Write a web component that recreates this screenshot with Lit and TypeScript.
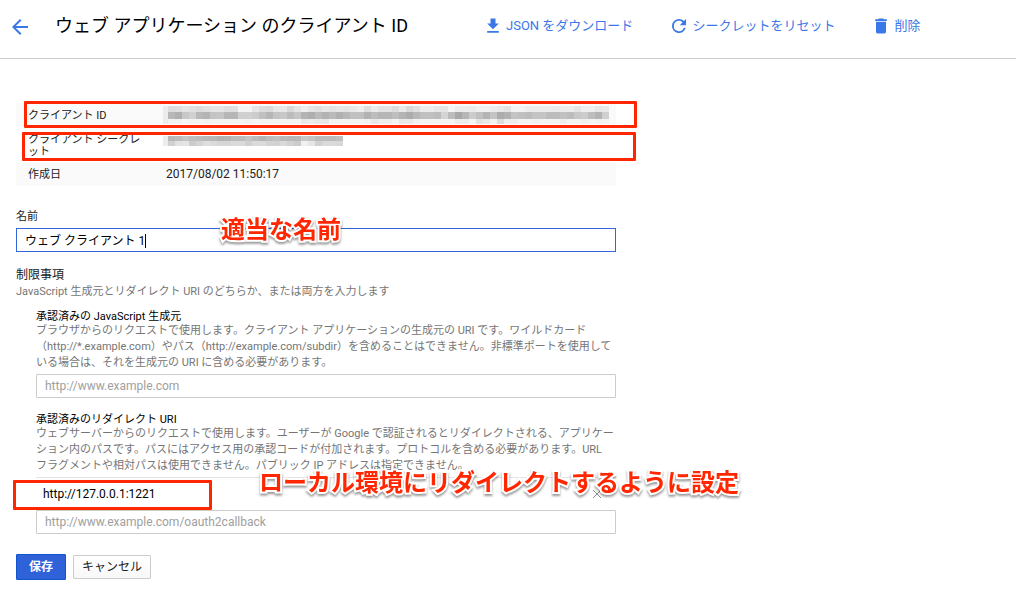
import { LitElement, html, css, svg } from "lit";
import { customElement, property, state } from "lit/decorators.js";

/* Masked values: one string per band, one hex byte per 7px cell. */
interface Band {
  y: number;
  height: number;
  shades: string;
}

const ID_BANDS: Band[] = [
  {
    y: 0,
    height: 6,
    shades:
      "dcdee4e0dce0e4e4dee0f4f4e6dcdae6e8d8e4eee4e0e6e2e6e4e8eedeeae2e4dce8d8e0ecece6e4f4ececeaf0f0ece8e2f2f2ececececeaecece4eeeee6e8",
  },
  {
    y: 6,
    height: 7,
    shades:
      "b8b0c8d0b8b4c4c6b6b6d0d0ccc0b6c4c8bcc6b4aebab2bab0b8c0c0b2bcb6b6beb4acb8c0c0bcd4bca8b6ccc0b4c4acb2c4c0bcc4c4bcbcc2bcc8ccbeb4d0",
  },
  {
    y: 13,
    height: 5,
    shades:
      "f2f2f6f4f4f2f4f4f4f4f4f2f6f4f4f4f4f4f4e8ece8e6f4f4f4f4f4f2e8eeeef4e8eaf2f4f4f4f4f4ececf4e2e8f2dceeeef4f4f2f4f4f4eef4f4f0f4f2f4",
  },
];

const SECRET_BANDS: Band[] = [
  { y: 0, height: 5, shades: "b8bcc4bebcb8b8b2b4bcbcc4bcb4bcc0bab8b8c8c4bcbcbcc0" },
  { y: 5, height: 5, shades: "d0e2e4ccd4dedad6d6dadad0dadad4d2dad2ccf0e6d0dadad8" },
];

const CELL = 7;

@customElement("masked-value")
class MaskedValue extends LitElement {
  @property({ attribute: false }) bands: Band[] = [];
  @property() label = "";

  static styles = css`
    :host {
      display: block;
    }
    .mosaic {
      display: block;
      overflow: visible;
    }
  `;

  render() {
    const height = this.bands.reduce((h, b) => Math.max(h, b.y + b.height), 0);
    const width = Math.max(0, ...this.bands.map((b) => (b.shades.length / 2) * CELL));
    return html`<svg
      class="mosaic"
      role="img"
      aria-label=${this.label}
      width=${width}
      height=${height}
      shape-rendering="crispEdges"
    >
      <rect x="-5" y="0" width="5" height=${height} fill="#ececec"></rect>
      ${this.bands.map((band) =>
        (band.shades.match(/../g) ?? []).map(
          (v, i) => svg`<rect x=${i * CELL} y=${band.y} width=${CELL} height=${band.height} fill=${"#" + v + v + v}></rect>`
        )
      )}
    </svg>`;
  }
}

@customElement("app-root")
class AppRoot extends LitElement {
  @state() private name = "ウェブ クライアント 1";
  @state() private redirect = "http://127.0.0.1:1221";

  static styles = css`
    :host {
      display: block;
      position: relative;
      background: #fff;
      color: #212121;
      font-family: Roboto, "Noto Sans CJK JP", sans-serif;
      font-size: 11px;
      line-height: 16px;
    }
    *,
    *::before {
      box-sizing: border-box;
    }
    button,
    input {
      font: inherit;
      margin: 0;
    }
    h1,
    h2,
    p {
      margin: 0;
    }
    .topbar {
      display: flex;
      align-items: center;
      height: 59px;
      padding: 0 8px 6px;
      border-bottom: 1px solid #ccc;
    }
    .back {
      display: flex;
      margin-right: 23px;
      padding: 2px 0 0;
      border: 0;
      background: none;
      color: #3b78e7;
      cursor: pointer;
    }
    .title {
      margin-right: 75px;
      color: #000;
      font-size: 18px;
      font-weight: 400;
      line-height: 24px;
      white-space: nowrap;
    }
    .actions {
      display: flex;
      gap: 36px;
    }
    .action {
      display: flex;
      align-items: center;
      gap: 3px;
      padding: 0;
      border: 0;
      background: none;
      color: #3b78e7;
      font-size: 13px;
      line-height: 20px;
      white-space: nowrap;
      cursor: pointer;
    }
    .icon {
      display: block;
      fill: currentColor;
    }
    .content {
      max-width: 632px;
      padding: 44px 16px 32px;
    }
    .facts {
      width: 100%;
      border-collapse: collapse;
      table-layout: fixed;
      line-height: 12px;
    }
    .facts th {
      width: 150px;
      padding: 2px 18px 0 12px;
      font-weight: 400;
      text-align: left;
    }
    .facts td {
      padding: 0 0 0 2px;
    }
    .facts tr {
      height: 24px;
    }
    .facts tr:nth-child(odd) {
      background: #fafafa;
    }
    .facts .tall {
      height: 35px;
    }
    .facts .tall th,
    .facts .tall td {
      vertical-align: top;
    }
    .facts .tall th {
      padding-top: 7px;
    }
    .facts .tall td {
      padding-top: 9px;
    }
    .facts .date {
      padding-left: 0;
      font-size: 12px;
    }
    .label {
      display: block;
      margin: 23px 0 3px;
    }
    .field {
      position: relative;
    }
    .input {
      display: block;
      width: 100%;
      height: 24px;
      padding: 0 8px;
      border: 1px solid #ccc;
      border-radius: 1px;
      background: #fff;
      color: #000;
      font-size: 12px;
      outline: 0;
    }
    .input::placeholder {
      color: #a0a0a0;
      opacity: 1;
    }
    .input.active {
      padding-bottom: 2px;
      border-color: #3367d6;
      border-radius: 0;
    }
    .caret {
      position: absolute;
      top: 6px;
      left: 129px;
      width: 1px;
      height: 14px;
      background: #000;
    }
    .heading {
      margin-top: 15px;
      font-size: 12px;
      font-weight: 400;
      line-height: 17px;
    }
    .hint {
      color: #757575;
    }
    .group {
      display: flex;
      flex-direction: column;
      padding-left: 20px;
    }
    .group .hint {
      padding-right: 2px;
    }
    .group .label {
      margin: 0;
      color: #000;
      line-height: 13px;
    }
    .origins {
      margin-top: 10px;
    }
    .origins .input {
      margin-top: 3px;
    }
    .redirects {
      margin-top: 15px;
    }
    .entry {
      display: flex;
      align-items: center;
      height: 33px;
      margin-top: 3px;
      padding-right: 14px;
      border-top: 1px solid #e4e4e4;
    }
    .entry .input {
      flex: 1;
      padding: 0 6px;
      border-color: transparent;
    }
    .remove {
      display: flex;
      padding: 0;
      border: 0;
      background: none;
      color: #8a8a8a;
      cursor: pointer;
    }
    .buttons {
      display: flex;
      align-items: center;
      gap: 7px;
      margin-top: 20px;
    }
    .button {
      height: 24px;
      padding: 0 8px;
      border: 1px solid #ccc;
      border-radius: 1px;
      background: linear-gradient(#fff, #f8f8f8);
      color: #212121;
      font-size: 12px;
      line-height: 20px;
      cursor: pointer;
    }
    .button.primary {
      height: 26px;
      padding: 0 12px;
      border-color: #1155cc;
      background: #2f62d9;
      color: #fff;
      font-weight: 700;
    }
    /* Red callouts laid over the form. */
    .mark {
      position: absolute;
      border: 3px solid #ff2600;
      border-radius: 1px;
      pointer-events: none;
    }
    .mark-id {
      top: 101px;
      left: 24px;
      width: 613px;
      height: 27px;
    }
    .mark-secret {
      top: 132px;
      left: 22px;
      width: 614px;
      height: 29px;
    }
    .mark-redirect {
      top: 480px;
      left: 13px;
      width: 199px;
      height: 30px;
    }
    .note {
      position: absolute;
      color: #ff2600;
      font-size: 24px;
      font-weight: 700;
      line-height: 32px;
      white-space: nowrap;
      pointer-events: none;
      -webkit-text-stroke: 4px #fff;
      paint-order: stroke fill;
      filter: drop-shadow(0 2px 1px rgba(0, 0, 0, 0.4));
    }
    .note-name {
      top: 214px;
      left: 221px;
    }
    .note-redirect {
      top: 467px;
      left: 259px;
    }
  `;

  private icon(path: string, size = 20) {
    return html`<svg class="icon" width=${size} height=${size} viewBox="0 0 24 24" aria-hidden="true">
      <path d=${path}></path>
    </svg>`;
  }

  render() {
    return html`
      <header class="topbar">
        <button class="back" type="button" aria-label="戻る">
          ${this.icon("M20 11H7.83l5.59-5.59L12 4l-8 8 8 8 1.41-1.41L7.83 13H20v-2z", 24)}
        </button>
        <h1 class="title">ウェブ アプリケーション のクライアント ID</h1>
        <div class="actions">
          <button class="action" type="button">
            ${this.icon("M19 9h-4V3H9v6H5l7 7 7-7zM5 18v2h14v-2H5z")}<span>JSON をダウンロード</span>
          </button>
          <button class="action" type="button">
            ${this.icon(
              "M17.9 6.1A8.400 8.400 0 0 0 12 3.600a8.400 8.400 0 1 0 8.100 10.600h-2.250A6.200 6.200 0 1 1 12 5.800c1.700 0 3.200.7 4.300 1.800L13 11h7.400V3.600L17.9 6.100z"
            )}<span>シークレットをリセット</span>
          </button>
          <button class="action" type="button">
            ${this.icon("M6 19c0 1.1.9 2 2 2h8c1.100 0 2-.9 2-2V7H6v12zM19 4h-3.500l-1-1h-5l-1 1H5v2h14V4z")}<span>削除</span>
          </button>
        </div>
      </header>

      <main class="content">
        <table class="facts">
          <tbody>
            <tr>
              <th scope="row">クライアント ID</th>
              <td><masked-value label="クライアント ID" .bands=${ID_BANDS}></masked-value></td>
            </tr>
            <tr class="tall">
              <th scope="row">クライアント シークレット</th>
              <td><masked-value label="クライアント シークレット" .bands=${SECRET_BANDS}></masked-value></td>
            </tr>
            <tr>
              <th scope="row">作成日</th>
              <td class="date">2017/08/02 11:50:17</td>
            </tr>
          </tbody>
        </table>

        <label class="label" for="name">名前</label>
        <div class="field">
          <input
            class="input active"
            id="name"
            type="text"
            .value=${this.name}
            @input=${(e: Event) => (this.name = (e.target as HTMLInputElement).value)}
          />
          <span class="caret"></span>
        </div>

        <h2 class="heading">制限事項</h2>
        <p class="hint">JavaScript 生成元とリダイレクト URI のどちらか、または両方を入力します</p>

        <section class="group origins">
          <label class="label" for="origin">承認済みの JavaScript 生成元</label>
          <p class="hint">
            ブラウザからのリクエストで使用します。クライアント アプリケーションの生成元の URI です。ワイルドカード（http://*.example.com）やパス（http://example.com/subdir）を含めることはできません。非標準ポートを使用している場合は、それを生成元の URI に含める必要があります。
          </p>
          <input class="input" id="origin" type="text" placeholder="http://www.example.com" />
        </section>

        <section class="group redirects">
          <label class="label" for="redirect-new">承認済みのリダイレクト URI</label>
          <p class="hint">
            ウェブサーバーからのリクエストで使用します。ユーザーが Google で認証されるとリダイレクトされる、アプリケーション内のパスです。パスにはアクセス用の承認コードが付加されます。プロトコルを含める必要があります。URL フラグメントや相対パスは使用できません。パブリック IP アドレスは指定できません。
          </p>
          <div class="entry">
            <input
              class="input"
              type="text"
              aria-label="リダイレクト URI"
              .value=${this.redirect}
              @input=${(e: Event) => (this.redirect = (e.target as HTMLInputElement).value)}
            />
            <button class="remove" type="button" aria-label="削除" @click=${() => (this.redirect = "")}>
              <svg width="10" height="10" viewBox="0 0 10 10" fill="none" stroke="currentColor" aria-hidden="true">
                <path d="M1 1l8 8M9 1l-8 8"></path>
              </svg>
            </button>
          </div>
          <input class="input" id="redirect-new" type="text" placeholder="http://www.example.com/oauth2callback" />
        </section>

        <div class="buttons">
          <button class="button primary" type="button">保存</button>
          <button class="button" type="button">キャンセル</button>
        </div>
      </main>

      <div class="mark mark-id"></div>
      <div class="mark mark-secret"></div>
      <div class="mark mark-redirect"></div>
      <div class="note note-name">適当な名前</div>
      <div class="note note-redirect">ローカル環境にリダイレクトするように設定</div>
    `;
  }
}
